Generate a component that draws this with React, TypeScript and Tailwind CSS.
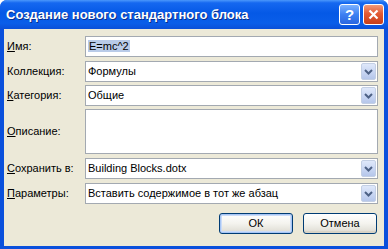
import React from "react";

const font = { fontFamily: '"Liberation Sans", Arial, sans-serif' };

const Chevron = () => (
    <svg width="9" height="6" viewBox="0 0 9 6">
        <polyline points="1,1 4.5,4.5 8,1" fill="none" stroke="#4d6185" strokeWidth="2" />
    </svg>
);

const Label = ({ u, rest }: { u: string; rest: string }) => (
    <div className="text-[11px] text-black flex items-center">
        <span className="underline underline-offset-[1px]">{u}</span>
        {rest}
    </div>
);

const Field = ({ children, combo }: { children?: React.ReactNode; combo?: boolean }) => (
    <div className="h-[21px] bg-white border border-[#a3a9b1] flex items-center pl-[2px] pr-[1px] text-[11px] text-black">
        <div className="flex-1">{children}</div>
        {combo && (
            <div className="w-[15px] h-[17px] rounded-[2px] border border-[#c3cfe4] bg-[linear-gradient(180deg,#dfe8fa_0%,#c6d4f2_60%,#b5c6ea_100%)] flex items-center justify-center">
                <Chevron />
            </div>
        )}
    </div>
);

const XpButton = ({ label, primary }: { label: string; primary?: boolean }) => (
    <div
        className={`w-[74px] h-[21px] rounded-[3px] border border-[#003c74] flex items-center justify-center text-[11px] text-black bg-[linear-gradient(180deg,#ffffff_0%,#f4f3ee_50%,#e4e2da_85%,#d6d0c5_100%)] ${
            primary ? "shadow-[inset_0_0_0_1px_#a8c6f5,inset_0_0_0_2px_#cbdcf8]" : "shadow-[inset_0_-2px_0_#d8d3c6]"
        }`}
    >
        {label}
    </div>
);

export default function App() {
    return (
        <div style={font} className="w-[388px] h-[249px] flex flex-col rounded-t-[7px] overflow-hidden bg-[#0a50dc]">
            {/* title bar */}
            <div className="h-[29px] shrink-0 flex items-center pl-[6px] pr-[4px] bg-[linear-gradient(180deg,#4b98fb_0%,#1568f0_10%,#0559e6_45%,#0a5ee9_80%,#0a4fd8_100%)]">
                <div className="flex-1 text-white font-bold text-[13px] [text-shadow:1px_1px_0_#0a2f8a]">
                    Создание нового стандартного блока
                </div>
                <div className="flex gap-[3px]">
                    <div className="w-[21px] h-[21px] rounded-[3px] border border-white bg-[linear-gradient(180deg,#7cb1ff_0%,#3d80f2_50%,#2a66e0_100%)] flex items-center justify-center text-white font-bold text-[15px] leading-none">
                        ?
                    </div>
                    <div className="w-[21px] h-[21px] rounded-[3px] border border-white bg-[linear-gradient(180deg,#f29a7a_0%,#e35a33_45%,#c8401a_100%)] flex items-center justify-center">
                        <svg width="11" height="11" viewBox="0 0 11 11">
                            <path d="M1.5 1.5 L9.5 9.5 M9.5 1.5 L1.5 9.5" stroke="white" strokeWidth="2.2" />
                        </svg>
                    </div>
                </div>
            </div>

            {/* body */}
            <div className="flex-1 ml-[4px] mr-[4px] mb-[3px] bg-[#ece9d8] pl-[3px] pr-[6px] pt-[7px]">
                <div className="grid grid-cols-[78px_1fr]">
                    <Label u="И" rest="мя:" />
                    <Field>
                        <span className="bg-[#b9cbe8] px-[1px]">E=mc^2</span>
                    </Field>

                    <div className="h-[4px] col-span-2" />
                    <Label u="" rest="Коллекция:" />
                    <Field combo>Формулы</Field>

                    <div className="h-[3px] col-span-2" />
                    <Label u="К" rest="атегория:" />
                    <Field combo>Общие</Field>

                    <div className="h-[3px] col-span-2" />
                    <Label u="О" rest="писание:" />
                    <div className="h-[45px] bg-white border border-[#a3a9b1]" />

                    <div className="h-[4px] col-span-2" />
                    <Label u="С" rest="охранить в:" />
                    <Field combo>Building Blocks.dotx</Field>

                    <div className="h-[4px] col-span-2" />
                    <Label u="П" rest="араметры:" />
                    <Field combo>Вставить содержимое в тот же абзац</Field>
                </div>

                <div className="flex justify-end gap-[10px] mt-[9px] mr-[1px]">
                    <XpButton label="ОК" primary />
                    <XpButton label="Отмена" />
                </div>
            </div>
        </div>
    );
}
